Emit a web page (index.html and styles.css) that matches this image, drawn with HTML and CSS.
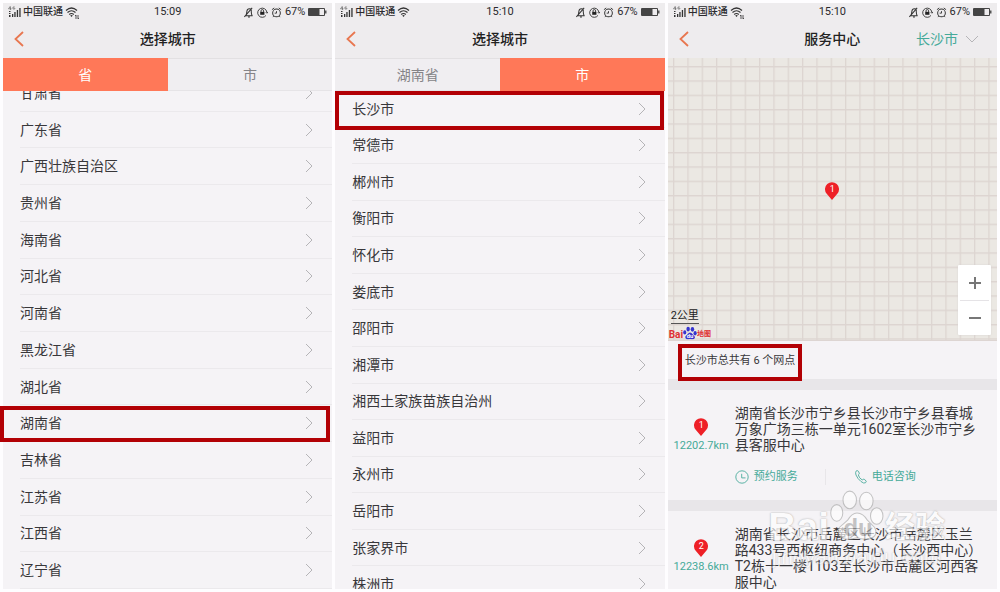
FILE: index.html
```html
<!DOCTYPE html>
<html lang="zh-CN">
<head>
<meta charset="utf-8">
<meta name="viewport" content="width=device-width, initial-scale=1">
<title>选择城市</title>
<link rel="stylesheet" href="styles.css">
</head>
<body>
<svg class="defs" aria-hidden="true">
  <symbol id="signal" viewBox="0 0 13 12"><g fill="#333"><path d="M1 5h1.500v1H1zM1 7h1.500v1H1zM1 9h1.500v2H1zM4 8h1.300v3H4zM6.300 6h1.300v5H6.300zM8.800 4h1.300v7H8.800zM11.300 2h1.300v9h-1.300z"/><path d="M2.500 0L.5 2.800h3M2.500 1v3M6.800 1H5v2h1.800V2" fill="none" stroke="#666" stroke-width=".7"/></g></symbol>
  <symbol id="wifi" viewBox="0 0 13 12"><g fill="none" stroke="#333" stroke-width="1.200"><path d="M1 4.500Q6.500-.5 12 4.500M2.500 6.500Q6.500 3 10.500 6.500M4.200 8.500Q6.500 6.500 8.800 8.500"/></g><path d="M5.200 9.500Q6.500 8.700 7.800 9.500L6.500 11z" fill="#333"/></symbol>
  <symbol id="arrows" viewBox="0 0 4 6"><path d="M1 5V1M0 2l1-1M3 1v4l1-1" fill="none" stroke="#444" stroke-width=".9"/></symbol>
  <symbol id="bell" viewBox="0 0 12 12"><path d="M2 9.500h8.500M3.200 9Q4 7.500 4.200 5q.3-3 2.800-3T9 5q0 2.500 1 4.500M5.500 11h2M1.500 10.800L10 1" fill="none" stroke="#333" stroke-width="1.100"/></symbol>
  <symbol id="lock" viewBox="0 0 12 12"><path d="M9.800 9.200A5 5 0 1 1 10.700 5.500M9.500 5.500l1.300 1.300L12 5.300" fill="none" stroke="#333"/><path d="M3.500 5.300h4.600v3.200H3.500z" fill="#222"/><path d="M4.400 5.500V4.200q0-1.400 1.400-1.400t1.400 1.400v1.300" fill="none" stroke="#222" stroke-width=".9"/></symbol>
  <symbol id="alarm" viewBox="0 0 12 12"><circle cx="6" cy="6.500" r="4.200" fill="none" stroke="#333" stroke-width="1.100"/><path d="M1 3l2.500-2M11 3L8.500 1M6 4.500v2.200H4M3 10l-1 1M9 10l1 1" fill="none" stroke="#333"/></symbol>
  <symbol id="battery" viewBox="0 0 19 9"><path d="M.5.5h16v7H.5z" fill="none" stroke="#444"/><path d="M1 1h10.500v6H1z" fill="#444"/><path d="M17 2.500h1.500v3H17z" fill="#555"/></symbol>
  <symbol id="back" viewBox="0 0 10 16"><path d="M9 1L1.500 8 9 15" fill="none" stroke="#e8764f" stroke-width="1.800"/></symbol>
  <symbol id="chevron" viewBox="0 0 8 14"><path d="M1 1l6 6-6 6" fill="none" stroke="#b5b4b7"/></symbol>
  <symbol id="down" viewBox="0 0 14 8"><path d="M1 1l6 6 6-6" fill="none" stroke="#b5b4b7"/></symbol>
  <symbol id="drop" viewBox="0 0 14 18"><path d="M7 18L1.500 11.500A7 7 0 1 1 12.500 11.500z" fill="#ee2027"/></symbol>
  <symbol id="clock" viewBox="0 0 14 14"><path d="M7 .8a6.200 6.200 0 1 1 0 12.400A6.200 6.200 0 0 1 7 .8zM6.700 3.800v4.100h3.800" fill="none" stroke="#4bab9c" stroke-width=".9"/></symbol>
  <symbol id="phone" viewBox="0 0 12 14"><path d="M1 1.200Q2.200-.2 3.300 1.200l1 2q.2 1-1 1.700Q4 8 7.200 10q1-1.200 2-.7l1.800 1.500q.8 1-.6 2-1.600 1-4.400-1.300Q2.500 8.700 1 5 .2 2.400 1 1.200z" fill="none" stroke="#4bab9c" stroke-width=".9"/></symbol>
  <symbol id="paw" viewBox="0 0 52 48"><ellipse cx="19" cy="9.500" rx="6.500" ry="8.500"/><ellipse cx="35" cy="10.500" rx="6.500" ry="8.500"/><ellipse cx="6.500" cy="22" rx="5.800" ry="8"/><ellipse cx="45" cy="25" rx="6" ry="8"/><path d="M26 22q6 0 10 7l7 7q4 8-5 11-6 1-12-1-7 2-12 1-8-3-5-11l8-7q4-7 9-7z"/></symbol>
</svg>

<main class="screens">
  <section class="phone" aria-label="选择省份">
    <div class="status">
      <span class="status-side"><svg class="i-signal"><use href="#signal"/></svg>中国联通<svg class="i-wifi"><use href="#wifi"/></svg><svg class="i-arrows"><use href="#arrows"/></svg></span>
      <time>15:09</time>
      <span class="status-side status-end"><svg class="i-status"><use href="#bell"/></svg><svg class="i-status"><use href="#lock"/></svg><svg class="i-status"><use href="#alarm"/></svg>67%<svg class="i-battery"><use href="#battery"/></svg></span>
    </div>
    <header class="bar">
      <button class="back" aria-label="返回"><svg><use href="#back"/></svg></button>
      <h1>选择城市</h1>
    </header>
    <nav class="tabs"><button class="tab active">省</button><button class="tab">市</button></nav>
    <div class="viewport">
      <ul class="list scrolled">
        <li><a href="#">甘肃省<svg><use href="#chevron"/></svg></a></li>
        <li><a href="#">广东省<svg><use href="#chevron"/></svg></a></li>
        <li><a href="#">广西壮族自治区<svg><use href="#chevron"/></svg></a></li>
        <li><a href="#">贵州省<svg><use href="#chevron"/></svg></a></li>
        <li><a href="#">海南省<svg><use href="#chevron"/></svg></a></li>
        <li><a href="#">河北省<svg><use href="#chevron"/></svg></a></li>
        <li><a href="#">河南省<svg><use href="#chevron"/></svg></a></li>
        <li><a href="#">黑龙江省<svg><use href="#chevron"/></svg></a></li>
        <li><a href="#">湖北省<svg><use href="#chevron"/></svg></a></li>
        <li class="marked marked-province"><a href="#">湖南省<svg><use href="#chevron"/></svg></a></li>
        <li><a href="#">吉林省<svg><use href="#chevron"/></svg></a></li>
        <li><a href="#">江苏省<svg><use href="#chevron"/></svg></a></li>
        <li><a href="#">江西省<svg><use href="#chevron"/></svg></a></li>
        <li><a href="#">辽宁省<svg><use href="#chevron"/></svg></a></li>
      </ul>
    </div>
  </section>

  <section class="phone" aria-label="选择城市">
    <div class="status">
      <span class="status-side"><svg class="i-signal"><use href="#signal"/></svg>中国联通<svg class="i-wifi"><use href="#wifi"/></svg></span>
      <time>15:10</time>
      <span class="status-side status-end"><svg class="i-status"><use href="#bell"/></svg><svg class="i-status"><use href="#lock"/></svg><svg class="i-status"><use href="#alarm"/></svg>67%<svg class="i-battery"><use href="#battery"/></svg></span>
    </div>
    <header class="bar">
      <button class="back" aria-label="返回"><svg><use href="#back"/></svg></button>
      <h1>选择城市</h1>
    </header>
    <nav class="tabs"><button class="tab">湖南省</button><button class="tab active">市</button></nav>
    <div class="viewport">
      <ul class="list overflowing">
        <li class="marked marked-city"><a href="#">长沙市<svg><use href="#chevron"/></svg></a></li>
        <li><a href="#">常德市<svg><use href="#chevron"/></svg></a></li>
        <li><a href="#">郴州市<svg><use href="#chevron"/></svg></a></li>
        <li><a href="#">衡阳市<svg><use href="#chevron"/></svg></a></li>
        <li><a href="#">怀化市<svg><use href="#chevron"/></svg></a></li>
        <li><a href="#">娄底市<svg><use href="#chevron"/></svg></a></li>
        <li><a href="#">邵阳市<svg><use href="#chevron"/></svg></a></li>
        <li><a href="#">湘潭市<svg><use href="#chevron"/></svg></a></li>
        <li><a href="#">湘西土家族苗族自治州<svg><use href="#chevron"/></svg></a></li>
        <li><a href="#">益阳市<svg><use href="#chevron"/></svg></a></li>
        <li><a href="#">永州市<svg><use href="#chevron"/></svg></a></li>
        <li><a href="#">岳阳市<svg><use href="#chevron"/></svg></a></li>
        <li><a href="#">张家界市<svg><use href="#chevron"/></svg></a></li>
        <li><a href="#">株洲市<svg><use href="#chevron"/></svg></a></li>
      </ul>
    </div>
  </section>

  <section class="phone" aria-label="服务中心">
    <div class="status">
      <span class="status-side"><svg class="i-signal"><use href="#signal"/></svg>中国联通<svg class="i-wifi"><use href="#wifi"/></svg><svg class="i-arrows"><use href="#arrows"/></svg></span>
      <time>15:10</time>
      <span class="status-side status-end"><svg class="i-status"><use href="#bell"/></svg><svg class="i-status"><use href="#lock"/></svg><svg class="i-status"><use href="#alarm"/></svg>67%<svg class="i-battery"><use href="#battery"/></svg></span>
    </div>
    <header class="bar">
      <button class="back" aria-label="返回"><svg><use href="#back"/></svg></button>
      <h1>服务中心</h1>
      <label class="city"><select aria-label="城市"><option>长沙市</option></select><svg><use href="#down"/></svg></label>
    </header>
    <div class="map">
      <svg class="map-grid" aria-hidden="true">
        <defs><pattern id="grid" width="43" height="43" patternUnits="userSpaceOnUse" patternTransform="translate(5 8) scale(.3333)"><path d="M2 0v43M0 2h43" stroke="#ddd5d1" stroke-width="4"/></pattern></defs>
        <rect width="100%" height="100%" fill="url(#grid)"/>
      </svg>
      <span class="pin map-pin"><svg><use href="#drop"/></svg><b>1</b></span>
      <div class="map-info">
        <span class="scale">2公里</span>
        <span class="brand"><b>Bai</b><svg viewBox="0 0 52 48"><use href="#paw"/><text x="14" y="43">du</text></svg><i>地图</i></span>
      </div>
      <div class="zoom"><button aria-label="放大"><svg viewBox="0 0 14 14"><path d="M1 7h12M7 1v12"/></svg></button><button aria-label="缩小"><svg viewBox="0 0 14 14"><path d="M1 7h12"/></svg></button></div>
    </div>
    <div class="summary"><p>长沙市总共有 6 个网点</p></div>
    <div class="centers">
      <article class="center">
        <div class="place"><span class="pin"><svg><use href="#drop"/></svg><b>1</b></span><span>12202.7km</span></div>
        <div class="detail">
          <p>湖南省长沙市宁乡县长沙市宁乡县春城万象广场三栋一单元1602室长沙市宁乡县客服中心</p>
          <div class="actions"><a href="#"><svg class="i-clock"><use href="#clock"/></svg>预约服务</a><a href="#"><svg class="i-phone"><use href="#phone"/></svg>电话咨询</a></div>
        </div>
      </article>
      <article class="center">
        <div class="place"><span class="pin"><svg><use href="#drop"/></svg><b>2</b></span><span>12238.6km</span></div>
        <div class="detail">
          <p>湖南省长沙市岳麓区长沙市岳麓区玉兰路433号西枢纽商务中心（长沙西中心）T2栋十一楼1103至长沙市岳麓区河西客服中心</p>
        </div>
      </article>
    </div>
    <div class="watermark">
      <div class="mark-row"><span>Bai</span><svg viewBox="0 0 52 48"><use href="#paw"/><text x="13" y="44">du</text></svg><span class="mark-cn">经验</span></div>
      <div class="mark-url">jingyan.baidu.com</div>
    </div>
  </section>
</main>
</body>
</html>
```
FILE: styles.css
```css
* { box-sizing: border-box; }
body {
  margin: 0;
  background: #fefdff;
  color: #38373a;
  font: 14px/16px Roboto, "Noto Sans CJK SC", sans-serif;
}
button, select { font: inherit; color: inherit; border: 0; padding: 0; background: none; }
a { color: inherit; text-decoration: none; }
h1, p, ul { margin: 0; padding: 0; }
svg { display: block; flex: none; }
.defs { position: absolute; width: 0; height: 0; }

.screens {
  display: grid;
  grid-template-columns: repeat(3, minmax(0, 1fr));
  gap: 3px;
  height: 100vh;
  padding: 3px;
}
.phone {
  position: relative;
  display: flex;
  flex-direction: column;
  min-height: 0;
  background: #f5f3f6;
}

/* status bar */
.status {
  display: grid;
  grid-template-columns: 1fr auto 1fr;
  align-items: center;
  height: 18px;
  padding: 0 5px;
  background: #eeecee;
  color: #2b2a2d;
  font-size: 10px;
  font-weight: 500;
}
.status time { font-size: 11px; font-weight: 400; }
.status-side { display: flex; align-items: center; }
.status-end { justify-content: flex-end; gap: 3px; font-size: 11px; font-weight: 400; }
.i-signal { width: 13px; height: 12px; margin-right: 2px; }
.i-wifi { width: 13px; height: 12px; margin-left: 2px; }
.i-arrows { width: 4px; height: 6px; align-self: flex-end; margin-left: -3px; }
.i-status { width: 11px; height: 11px; }
.i-battery { width: 19px; height: 9px; }

/* title bar */
.bar {
  display: grid;
  grid-template-columns: 1fr auto 1fr;
  align-items: center;
  height: 37px;
  padding: 0 18px 2px 11px;
  background: #eeecee;
}
.bar h1 { grid-column: 2; font-size: 14px; font-weight: 500; padding-left: 7px; color: #222; }
.back { justify-self: start; }
.back svg { width: 10px; height: 16px; }
.city { justify-self: end; display: flex; align-items: center; gap: 7px; color: #45aa99; }
.city select { appearance: none; height: 20px; }
.city svg { width: 14px; height: 8px; }

/* tabs */
.tabs { display: flex; height: 33px; }
.tab { flex: 1; background: #f0eef1; color: #858487; border-top: 1px solid #e2e0e2; border-bottom: 1px solid #e6e4e7; }
.tab.active { background: #ff7858; border-color: #ff7858; color: #fff; }

/* lists */
.viewport { flex: 1; min-height: 0; overflow-x: visible; overflow-y: clip; display: flex; flex-direction: column; }
.list { flex: 1; display: grid; grid-auto-rows: 1fr; list-style: none; }
.scrolled { margin-top: -16px; }
.overflowing { margin-bottom: -14px; }
.list li { position: relative; padding-left: 17px; }
.list a {
  display: flex;
  align-items: center;
  justify-content: space-between;
  height: 100%;
  padding-right: 19px;
  border-bottom: 1px solid #ebe9ec;
}
.list svg { width: 8px; height: 14px; }
.marked::after { content: ""; position: absolute; border: 4px solid #b20005; pointer-events: none; }
.marked-province::after { inset: 1px 2px 0 -3px; }
.marked-city::after { inset: 0 1px -2px 0; }

/* map */
.map { position: relative; flex: none; height: 283px; background: #ebe8e3; border-bottom: 1px solid #ddd5d2; }
.map-grid { width: 100%; height: 100%; }
.pin { position: relative; display: block; width: 14px; height: 18px; }
.pin svg { width: 14px; height: 18px; }
.pin b { position: absolute; inset: 0; color: #fff; font-size: 9px; font-weight: 400; line-height: 14px; text-align: center; }
.map-pin { position: absolute; left: 50%; top: 124px; margin-left: -7px; }
.map-info { position: absolute; left: 1px; bottom: 0; display: flex; flex-direction: column; align-items: flex-start; gap: 2px; color: #222; }
.scale { margin-left: 2px; border-bottom: 1px solid #555; font-size: 11px; line-height: 15px; }
.brand { display: flex; align-items: flex-end; color: #df2f32; font-size: 10px; line-height: 11px; }
.brand svg { width: 14px; height: 14px; fill: #3634cf; }
.brand text { fill: #fff; font-size: 22px; font-weight: 700; }
.brand i { font-size: 7px; font-style: normal; font-weight: 700; }
.zoom { position: absolute; right: 6px; bottom: 5px; width: 33px; display: grid; padding: 0 2px; background: #fff; border-radius: 1px; box-shadow: 0 0 2px #d5d2d0; }
.zoom button { display: grid; place-items: center; height: 35px; }
.zoom button + button { border-top: 1px solid #e5e3e6; }
.zoom svg { width: 14px; height: 14px; stroke: #777; stroke-width: 2; }

/* service centres */
.summary { flex: none; height: 38px; padding: 3px 10px 0; }
.summary p { position: relative; display: inline-block; height: 37px; padding: 4px 3px; border: 4px solid #b20005; font-size: 11px; line-height: 18px; white-space: nowrap; }
.centers { flex: 1; min-height: 0; overflow: hidden; }
.center { display: grid; grid-template-columns: 67px 1fr; border-top: 11px solid #e8e6e9; }
.place { display: flex; flex-direction: column; align-items: center; padding-top: 28px; gap: 2px; color: #45aa99; font-size: 11px; }
.detail { padding: 15px 11px 15px 0; }
.actions { display: flex; margin-top: 16px; color: #45aa99; font-size: 11px; }
.actions a { display: flex; align-items: center; gap: 5px; }
.actions a:first-child { width: 91px; border-right: 1px solid #e8e6e9; }
.actions a + a { padding-left: 29px; }
.i-clock { width: 14px; height: 14px; }
.i-phone { width: 12px; height: 14px; }

/* watermark */
.watermark { position: absolute; right: 52px; bottom: 20px; color: #fff; opacity: .65; pointer-events: none; white-space: nowrap; text-shadow: 0 0 2px #999, 0 0 1px #aaa; }
.mark-row { display: flex; align-items: flex-end; gap: 1px; font: 700 39px/36px "Liberation Sans", "Noto Sans CJK SC", sans-serif; }
.mark-row svg { width: 54px; height: 60px; fill: #fff; stroke: #aaa; }
.mark-row text { fill: #aaa; stroke: none; font-size: 23px; text-shadow: none; }
.mark-cn { font-size: 30px; }
.mark-url { font: 21px/24px "Liberation Sans", sans-serif; text-align: center; opacity: .6; }
```
